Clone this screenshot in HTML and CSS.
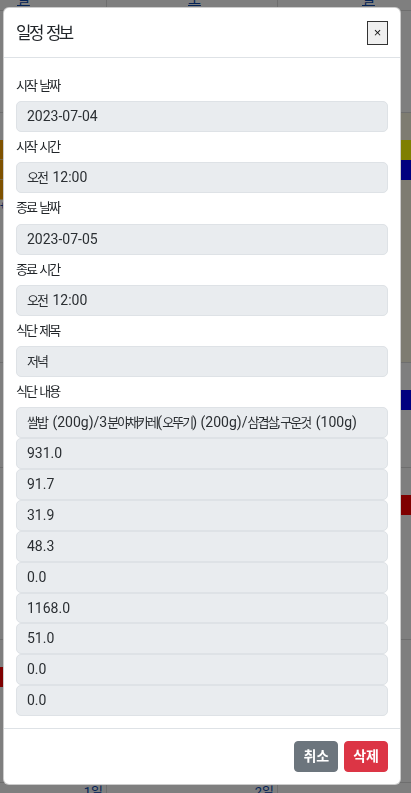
FILE: index.html
```html
<!DOCTYPE html>
<html lang="ko">
<head>
<meta charset="utf-8">
<title>일정 정보</title>
<link rel="stylesheet" href="styles.css">
</head>
<body>
<div class="cal">
  <div class="cell head"><a class="dn dn-l">일</a></div>
  <div class="cell head"><a class="dn dn-c">토</a></div>
  <div class="cell head last"><a class="dn dn-r">일</a></div>

  <div class="cell"></div>
  <div class="cell"></div>
  <div class="cell last"></div>

  <div class="cell">
    <div class="ev ev-orange first"></div>
    <div class="ev ev-orange"></div>
    <div class="ev ev-orange"></div>
    <a class="more">+2</a>
  </div>
  <div class="cell"></div>
  <div class="cell last today">
    <div class="ev ev-yellow first"></div>
    <div class="ev ev-blue"></div>
  </div>

  <div class="cell"></div>
  <div class="cell"></div>
  <div class="cell last"><div class="ev ev-blue first"></div></div>

  <div class="cell"></div>
  <div class="cell"></div>
  <div class="cell last"><div class="ev ev-red first"></div></div>

  <div class="cell"><div class="ev ev-red first"></div></div>
  <div class="cell"></div>
  <div class="cell last"></div>

  <div class="cell num"><a class="dnum">1일</a></div>
  <div class="cell num"><a class="dnum">2일</a></div>
  <div class="cell num last"></div>
</div>

<div class="overlay">
  <div class="dialog">
    <div class="modal-header">
      <h5 class="modal-title"><span class="ko">일정 정보</span></h5>
      <button class="close-btn" type="button">×</button>
    </div>
    <div class="modal-body">
      <label class="label"><span class="ko">시작 날짜</span></label>
      <div class="control">2023-07-04</div>
      <label class="label"><span class="ko">시작 시간</span></label>
      <div class="control"><span class="ko sp">오전</span> 12:00</div>
      <label class="label"><span class="ko">종료 날짜</span></label>
      <div class="control">2023-07-05</div>
      <label class="label"><span class="ko">종료 시간</span></label>
      <div class="control"><span class="ko sp">오전</span> 12:00</div>
      <label class="label"><span class="ko">식단 제목</span></label>
      <div class="control"><span class="ko">저녁</span></div>
      <label class="label"><span class="ko">식단 내용</span></label>
      <div class="stack">
        <div class="control"><span class="ko sp">쌀밥</span> (200g)/3<span class="ko">분야채카레</span>(<span class="ko">오뚜기</span>) (200g)/<span class="ko">삼겹살</span>,<span class="ko sp">구운것</span> (100g)</div>
        <div class="control">931.0</div>
        <div class="control">91.7</div>
        <div class="control">31.9</div>
        <div class="control">48.3</div>
        <div class="control">0.0</div>
        <div class="control">1168.0</div>
        <div class="control">51.0</div>
        <div class="control">0.0</div>
        <div class="control">0.0</div>
      </div>
    </div>
    <div class="modal-footer">
      <button class="btn btn-gray" type="button">취소</button>
      <button class="btn btn-red" type="button">삭제</button>
    </div>
  </div>
</div>
</body>
</html>
```
FILE: styles.css
```css
* { box-sizing: border-box; }
html, body { margin: 0; padding: 0; }
body {
  font-family: Roboto, "Noto Sans CJK KR", sans-serif;
  font-size: 14px;
  color: #212529;
  background: #fff;
  overflow: hidden;
  height: 793px;
}
.ko {
  font-size: 0.93em;
  letter-spacing: -0.15em;
  word-spacing: 0.15em;
}
.ko.sp { padding-right: 0.15em; }

/* background calendar */
.cal {
  display: grid;
  grid-template-columns: 107px 171px 133px;
  grid-template-rows: 11px 102px 250px 105px 172px 143px 10px;
  height: 793px;
}
.cell {
  border-right: 1px solid #ddd;
  border-bottom: 1px solid #ddd;
  overflow: hidden;
}
.cell.last { border-right: 0; }
.dn {
  display: block;
  color: #0645ad;
  text-decoration: underline;
  font-size: 14px;
  line-height: 14px;
  margin-top: -8px;
}
.dn-l { padding-left: 17px; }
.dn-c { padding-left: 81px; }
.dn-r { padding-left: 84px; }
.today { background: #fcf8e3; }
.ev { height: 20px; }
.ev.first { margin-top: 27px; }
.ev-orange { background: #ffa500; border-bottom: 1px solid #ffd080; }
.ev-yellow { background: #ffff00; }
.ev-blue { background: #0000ff; }
.ev-red { background: #ff0000; }
.more { display: block; color: #0645ad; font-size: 10px; line-height: 12px; }
.cell.num { border-bottom: 0; text-align: right; }
.dnum {
  display: block;
  padding-right: 3px;
  color: #0645ad;
  font-size: 13px;
  line-height: 13px;
  margin-top: 2px;
}

/* modal */
.overlay {
  position: fixed;
  inset: 0;
  background: rgba(0, 0, 0, 0.5);
}
.dialog {
  margin: 7px 0 0 3px;
  width: 398px;
  background: #fff;
  border: 1px solid rgba(0, 0, 0, 0.2);
  border-radius: 6px;
  display: flex;
  flex-direction: column;
}
.modal-header {
  display: flex;
  align-items: center;
  justify-content: space-between;
  padding: 12.5px 12px;
  border-bottom: 1px solid #dee2e6;
}
.modal-title {
  margin: 0;
  font-size: 18px;
  font-weight: 400;
  line-height: 24px;
  color: #212529;
}
.close-btn {
  width: 21px;
  height: 24px;
  padding: 0;
  border: 1px solid #333;
  background: #efefef;
  font-family: "Liberation Sans", sans-serif;
  font-size: 13px;
  line-height: 20px;
  color: #111;
}
.modal-body {
  padding: 14px 12px 12px;
  display: flex;
  flex-direction: column;
}
.label {
  display: block;
  line-height: 21px;
  margin: 4px 0 5.3px;
  font-size: 14px;
  color: #212529;
}
.label:first-child { margin-top: 3px; }
.control {
  width: 100%;
  height: 30.9px;
  padding: 0 10px;
  border: 1px solid #dee2e6;
  border-radius: 5px;
  background: #e9ecef;
  font-size: 14px;
  line-height: 28.9px;
  color: #2b2f33;
  white-space: nowrap;
  overflow: hidden;
}
.stack { display: flex; flex-direction: column; }
.modal-footer {
  display: flex;
  justify-content: flex-end;
  gap: 6px;
  padding: 12px 12px;
  border-top: 1px solid #dee2e6;
}
.btn {
  height: 31px;
  padding: 0 8px;
  border: 1px solid transparent;
  border-radius: 4px;
  color: #fff;
  font-family: Roboto, "Noto Sans CJK KR", sans-serif;
  font-size: 14px;
  font-weight: 700;
  line-height: 29px;
}
.btn-gray { background: #6c757d; border-color: #6c757d; }
.btn-red { background: #dc3545; border-color: #dc3545; }
```
